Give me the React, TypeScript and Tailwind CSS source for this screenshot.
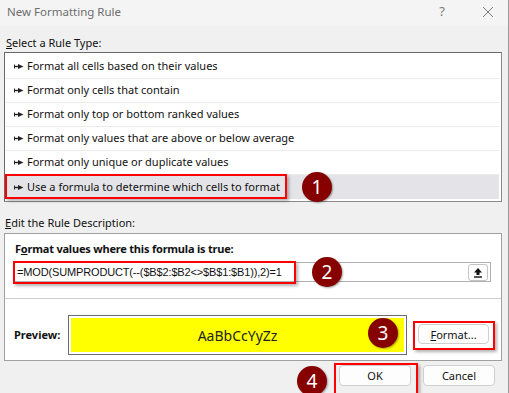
import React from 'react';

const ruleTypes = [
  'Format all cells based on their values',
  'Format only cells that contain',
  'Format only top or bottom ranked values',
  'Format only values that are above or below average',
  'Format only unique or duplicate values',
  'Use a formula to determine which cells to format',
];

function RowArrow() {
  return (
    <svg width="10" height="7" viewBox="0 0 10 7" className="shrink-0">
      <path d="M0.5 1.5v4" stroke="#222" strokeWidth="1" />
      <path d="M0.5 3.5h5" stroke="#222" strokeWidth="1.4" />
      <path d="M4 1l5.5 2.5L4 6z" fill="#222" />
    </svg>
  );
}

function Badge({ n, x, y }: { n: number; x: number; y: number }) {
  return (
    <div
      className="absolute w-[30px] h-[30px] rounded-full bg-[#870000] text-white text-[19px] flex items-center justify-center shadow-[1px_1px_2px_rgba(0,0,0,0.35)]"
      style={{ left: x - 15, top: y - 15 }}
    >
      {n}
    </div>
  );
}

function RedBox({ l, t, w, h }: { l: number; t: number; w: number; h: number }) {
  return (
    <div
      className="absolute border-2 border-[#ff0000] shadow-[2px_2px_3px_rgba(0,0,0,0.3)] pointer-events-none"
      style={{ left: l, top: t, width: w, height: h }}
    />
  );
}

export default function App() {
  return (
    <div
      className="relative w-[509px] h-[393px] overflow-hidden bg-[#f0f0f0] border-r border-[#9a9a9a] text-[11px] text-[#111]"
      style={{ fontFamily: '"Noto Sans", "Open Sans", sans-serif' }}
    >
      {/* Title bar */}
      <div className="h-[26px] bg-[#f4f4f4] flex items-start pt-[3px] pl-[7px] pr-[14px]">
        <span className="text-[#6e6e6e] text-[11.5px]">New Formatting Rule</span>
        <span className="ml-auto text-[#7a7a7a] text-[13px] mr-[37px] -mt-[1px]">?</span>
        <svg width="12" height="12" viewBox="0 0 12 12" className="mt-[3px]">
          <path d="M1 1l10 10M11 1L1 11" stroke="#7a7a7a" strokeWidth="1" />
        </svg>
      </div>

      <div className="pl-[4px] pr-[6px]">
        <div className="mt-[9px] h-[16px] leading-[16px] pl-[2px]">
          <span className="underline">S</span>elect a Rule Type:
        </div>

        {/* Rule list */}
        <div className="mt-[1px] h-[150px] bg-white border border-[#8a8a8a] border-t-[#6a6a6a] border-l-[#6a6a6a] pt-[2px] pl-[1px] pr-[2px]">
          {ruleTypes.map((r, i) => (
            <div
              key={r}
              className={
                'h-[24px] flex items-center gap-[3px] pl-[8px] ' +
                (i === 5 ? 'bg-[#e4e4e8]' : 'border-b border-[#ececec]')
              }
            >
              <RowArrow />
              <span>{r}</span>
            </div>
          ))}
        </div>

        <div className="mt-[13px] h-[16px] leading-[16px] pl-[1px]">
          <span className="underline">E</span>dit the Rule Description:
        </div>

        {/* Description group */}
        <div className="mt-[2px] bg-white border border-[#a0a0a0] pt-[7px] pb-[5px]">
          <div className="pl-[10px] h-[16px] leading-[16px] font-bold tracking-[-0.2px]">
            F<span className="underline">o</span>rmat values where this formula is true:
          </div>
          <div className="mt-[5px] ml-[8px] mr-[10px] h-[20px] border border-[#b0b0b0] flex items-center pl-[3px] pr-[2px]">
            <span
              className="text-[11px] tracking-[-0.15px]"
              style={{ fontFamily: '"Liberation Sans", Arial, sans-serif' }}
            >
              =MOD(SUMPRODUCT(--($B$2:$B2&lt;&gt;$B$1:$B1)),2)=1
            </span>
            <div className="ml-auto w-[20px] h-[17px] border border-[#c4c4c4] rounded-[3px] bg-white flex items-center justify-center">
              <svg width="10" height="11" viewBox="0 0 10 11">
                <path d="M5 1L1 5.5h2.5V8h3V5.5H9z" fill="#111" />
                <path d="M1 10h8" stroke="#111" strokeWidth="1.4" />
              </svg>
            </div>
          </div>
          <div className="mt-[16px] border-t border-[#cfcfcf]" />
          <div className="mt-[16px] flex items-center pl-[9px]">
            <span className="font-bold w-[54px]">Preview:</span>
            <div className="w-[339px] h-[40px] border border-[#6d6d6d] p-[2px]">
              <div className="w-full h-full bg-[#ffff00] flex items-center justify-center text-[14px] text-[#222]">
                AaBbCcYyZz
              </div>
            </div>
            <button className="ml-[11px] mt-[-2px] w-[71px] h-[20px] bg-[#fdfdfd] border border-[#cfcfcf] rounded-[4px] text-[11px] leading-none">
              <span className="underline">F</span>ormat...
            </button>
          </div>
        </div>

        {/* Bottom buttons */}
        <div className="mt-[4px] flex justify-end gap-[12px] pr-[7px]">
          <button className="w-[72px] h-[21px] bg-[#fdfdfd] border border-[#cfcfcf] rounded-[4px] text-[11px] leading-none">
            OK
          </button>
          <button className="w-[72px] h-[21px] bg-[#fdfdfd] border border-[#cfcfcf] rounded-[4px] text-[11px] leading-none">
            Cancel
          </button>
        </div>
      </div>

      {/* Annotations */}
      <RedBox l={5} t={174} w={282} h={25} />
      <RedBox l={13} t={261} w={283} h={23} />
      <RedBox l={413} t={321} w={82} h={29} />
      <RedBox l={334} t={363} w={84} h={32} />
      <Badge n={1} x={317} y={187} />
      <Badge n={2} x={327} y={272} />
      <Badge n={3} x={383} y={333} />
      <Badge n={4} x={312} y={381} />
    </div>
  );
}
